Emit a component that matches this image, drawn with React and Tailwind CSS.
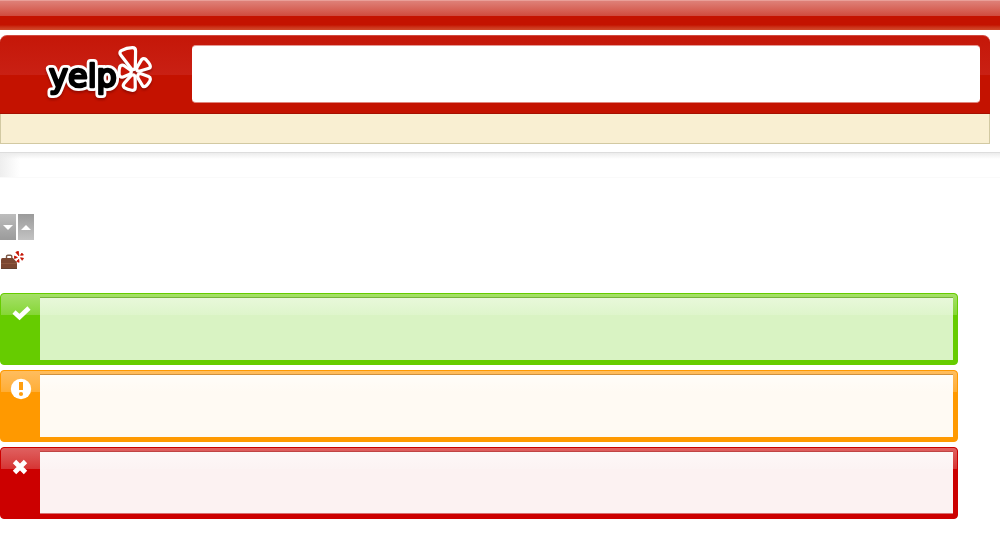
const ALERTS = [
  {
    id: 'success',
    label: 'Success',
    frame: 'bg-[#66cc00] border-[#66cc00]',
    top: 'from-[#a5e066] to-[#85d633]',
    line: 'border-t border-t-[#77b33c]',
    body: 'bg-[#d9f3c3]',
    sheen: 'from-[#e8f8da] to-[#def5cb]',
    icon: <path d="M14 12 L19.500 17 L29 8" fill="none" stroke="#fff" strokeWidth="4.6" />,
  },
  {
    id: 'warning',
    label: 'Warning',
    frame: 'bg-[#ff9900] border-[#ff9900]',
    top: 'from-[#ffbd5e] to-[#ffad33]',
    line: 'border-t border-t-[#cf9140]',
    body: 'bg-[#fffaf3]',
    sheen: 'from-[#fffdf9] to-[#fffaf3]',
    icon: (
      <>
        <circle cx="21" cy="12" r="10.2" fill="#fff" />
        <path d="M19 5h4v8h-4z" fill="#ff9f10" />
        <circle cx="21" cy="17" r="2.1" fill="#ff9f10" />
      </>
    ),
  },
  {
    id: 'error',
    label: 'Error',
    frame: 'bg-[#cc0000] border-[#cc0000]',
    top: 'from-[#df6060] to-[#d63333]',
    line: 'border-t border-b border-t-[#c04444] border-b-[#d87070]',
    body: 'bg-[#fcf2f2]',
    sheen: 'from-[#fdf7f7] to-[#fcf3f3]',
    icon: <path d="M14.500 7.500 L25.500 18.500 M25.500 7.500 L14.500 18.500" fill="none" stroke="#fff" strokeWidth="4.8" />,
  },
];

const PETALS = [
  'M122 52 Q127 49.500 132.500 49.300 Q134 49.300 134 51 L133.700 67 Q133.300 69 132 67 L122 54 Q121 52.800 122 52Z',
  'M143 60.500 Q144 59.500 145.500 61.500 Q149 65 148.700 66.800 L139.500 69.500 Q137.500 70 138.500 68Z',
  'M140.500 75.200 L148 78 Q149.500 78.600 148 81 Q145.500 85 144 85 L139.500 77.500 Q138.500 75 140.500 75.200Z',
  'M133.500 77.500 L133.700 87.500 Q133.700 89 132 88.700 Q128 88 125.200 86.200 Q124.500 85.500 125.500 84.200 L131.500 77.500 Q133.300 75.500 133.500 77.500Z',
  'M121.500 67 Q122.500 66.500 124 67.500 L129 71 Q130.500 72.300 128.500 73 L122.500 75.500 Q120.800 76 120.700 74 Q120.500 69 121.500 67Z',
];

function Alert({ alert }) {
  return (
    <section
      aria-label={alert.label}
      className={`flex h-[72px] flex-col overflow-hidden rounded-[4px] border ${alert.frame}`}
    >
      <div className="relative flex flex-1">
        <div className={`absolute inset-x-0 top-0 h-[21px] rounded-t-[3px] bg-linear-to-b ${alert.top}`} />
        <svg className="relative h-8 w-[39px] shrink-0" viewBox="1 -6 39 32" aria-hidden="true">
          {alert.icon}
        </svg>
        <div className={`relative mt-[3px] mr-1 mb-1 flex-1 ${alert.line} ${alert.body}`}>
          <div className={`h-[17px] bg-linear-to-b ${alert.sheen}`} />
        </div>
      </div>
    </section>
  );
}

function Logo() {
  return (
    <svg
      className="h-16 w-[124px] shrink-0 [filter:drop-shadow(0_2px_1px_rgba(80,0,0,0.4))]"
      viewBox="36 40 124 64"
      role="img"
      aria-label="yelp"
    >
      <g fill="#fff" stroke="#fff" strokeWidth="6.4" strokeLinejoin="round">
        {PETALS.map((d) => (
          <path key={d} d={d} />
        ))}
      </g>
      <g fill="#c71507">
        {PETALS.map((d) => (
          <path key={d} d={d} />
        ))}
      </g>
      <g
        className="font-['DejaVu_Sans',Verdana,sans-serif] font-normal"
        fontSize="32"
        strokeLinejoin="round"
      >
        <text x="49" y="87" fill="#fff" stroke="#fff" strokeWidth="8" aria-hidden="true">yelp</text>
        <text x="49" y="87" fill="#000" stroke="#000" strokeWidth="2.6">yelp</text>
      </g>
    </svg>
  );
}

function Briefcase() {
  return (
    <svg className="h-[19px] w-6" viewBox="0 251 24 19" role="img" aria-label="Business">
      <path d="M6.500 258v-1.500q0-1.300 1.300-1.300h2.700q1.300 0 1.300 1.300v1.500" fill="none" stroke="#7d5a48" strokeWidth="1.400" />
      <path d="M2.500 258h10.500l4 4.500v6.500H1v-9.500q0-1.500 1.500-1.500Z" fill="#7b4630" />
      <path d="M1 263.500h16" stroke="#8d563c" />
      <path d="M1 268.500h16" stroke="#64402f" />
      <g fill="#c41200" stroke="#c41200" strokeWidth="0.8" strokeLinejoin="round">
        <path d="M15.800 252.200l2.600-.9.400 4.500z" />
        <path d="M20.500 255.300l1.400-2.200 1.500 2z" />
        <path d="M20.500 257.700l3 .6-1.300 2z" />
        <path d="M18.700 259.300l.4 3-2.500-.9z" />
        <path d="M17.400 257.400l-2.900 1.200v-2.600z" />
      </g>
    </svg>
  );
}

export default function App() {
  return (
    <div className="min-h-screen bg-white font-['Liberation_Sans',Arial,sans-serif]">
      <div className="flex h-[30px] flex-col justify-between border-t border-[#e99f98] bg-[#c41200]">
        <div className="h-[15px] bg-linear-to-b from-[#de8078] to-[#d04a3d]" />
        <div className="h-[5px] bg-linear-to-b from-[#c41200] to-[#d14a2c]" />
      </div>

      <div className="mt-[5px] mr-[10px]">
        <header className="flex h-[79px] rounded-t-[7px] border-t border-b border-t-[#d14a40] border-b-[#a51000] bg-[linear-gradient(#c51708_0px,#c92014_39px,#c41200_39px)] pr-[10px]">
          <a href="#home" className="mt-1 ml-9 block h-16 w-[156px] shrink-0">
            <Logo />
          </a>
          <div className="mt-[9px] h-[58px] flex-1 rounded-[4px] border-t border-b border-t-[#e59a94] border-b-[#e0857d] bg-white" />
        </header>
        <div className="h-[30px] border-x border-b border-[#d2c9a2] bg-[#f9efd2]" />
      </div>

      <div className="mt-2 h-[26px] border-t border-b border-t-[#dddddd] border-b-[#fafafa] bg-[linear-gradient(#ececec,transparent_6px),linear-gradient(to_right,#eeeeee,#fcfcfc_16px,#ffffff_20px)]" />

      <main className="pt-9">
        <div className="flex gap-[2px]">
          <button type="button" aria-label="Move down" className="flex h-[26px] w-4 items-center justify-center bg-linear-to-b from-[#bdbdbd] to-[#9b9b9b]">
            <svg className="h-[5px] w-[10px]" viewBox="0 0 10 5" aria-hidden="true">
              <path d="M0 0h10L5 5z" fill="#fff" />
            </svg>
          </button>
          <button type="button" aria-label="Move up" className="flex h-[26px] w-4 items-center justify-center bg-linear-to-b from-[#9b9b9b] to-[#c3c3c3]">
            <svg className="h-[5px] w-[10px]" viewBox="0 0 10 5" aria-hidden="true">
              <path d="M0 5h10L5 0z" fill="#fff" />
            </svg>
          </button>
        </div>
        <div className="mt-[11px] flex">
          <Briefcase />
        </div>
        <div className="mt-[23px] mr-[42px] flex flex-col gap-[5px]">
          {ALERTS.map((alert) => (
            <Alert key={alert.id} alert={alert} />
          ))}
        </div>
      </main>
    </div>
  );
}
